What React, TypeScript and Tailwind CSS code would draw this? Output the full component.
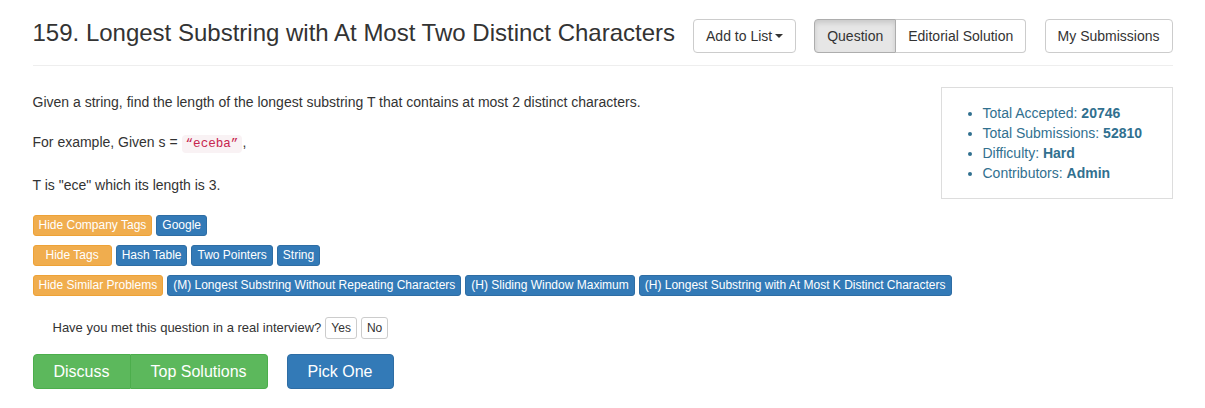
import React from 'react';

const Tag: React.FC<{ kind: 'warn' | 'primary'; wide?: boolean; children: React.ReactNode }> = ({ kind, wide, children }) => (
  <span
    className={
      'inline-block whitespace-nowrap rounded-[3px] border text-[12px] leading-[17px] py-px text-white ' +
      (wide ? 'px-3 ' : 'px-[5px] ') +
      (kind === 'warn' ? 'bg-[#f0ad4e] border-[#eea236]' : 'bg-[#337ab7] border-[#2e6da4]')
    }
  >
    {children}
  </span>
);

const App: React.FC = () => {
  return (
    <div className="min-h-[408px] bg-white text-[#333] font-['Liberation_Sans',Arial,sans-serif] text-[14px] leading-[20px]">
      <div className="w-[1170px] mx-auto px-[15px]">
        {/* header */}
        <div className="flex items-center whitespace-nowrap pt-[19px] pb-[12px] border-b border-[#eee]">
          <h3 className="text-[24px] leading-[28px] font-normal text-[#333] -mt-[6px]">
            159. Longest Substring with At Most Two Distinct Characters
          </h3>
          <button className="ml-[18px] h-[34px] px-[12px] border border-[#ccc] rounded-[4px] bg-white flex items-center gap-[3px]">
            Add to List
            <span className="inline-block w-0 h-0 border-x-[4px] border-x-transparent border-t-[4px] border-t-[#333]" />
          </button>
          <div className="ml-[18px] flex">
            <button className="h-[34px] px-[12px] border border-[#adadad] rounded-l-[4px] bg-[#e6e6e6] shadow-[inset_0_3px_5px_rgba(0,0,0,0.125)]">
              Question
            </button>
            <button className="h-[34px] px-[12px] border border-l-0 border-[#ccc] rounded-r-[4px] bg-white">
              Editorial Solution
            </button>
          </div>
          <button className="ml-auto h-[34px] px-[12px] border border-[#ccc] rounded-[4px] bg-white">
            My Submissions
          </button>
        </div>

        {/* body */}
        <div className="pt-[21px]">
          <div className="float-right w-[232px] h-[112px] border border-[#ddd] pt-[15px] pl-[41px] text-[#31708f] whitespace-nowrap">
            <ul className="list-disc">
              <li>Total Accepted: <b>20746</b></li>
              <li>Total Submissions: <b>52810</b></li>
              <li>Difficulty: <b>Hard</b></li>
              <li>Contributors: <b>Admin</b></li>
            </ul>
          </div>

          <p className="pt-[5px] mb-[20px]">Given a string, find the length of the longest substring T that contains at most 2 distinct characters.</p>
          <p className="mb-[20px] leading-[20px]">
            For example, Given s ={' '}
            <code className="font-['Liberation_Mono',monospace] text-[12.6px] text-[#c7254e] bg-[#f9f2f4] rounded-[4px] px-[4px] py-[2px]">
              “eceba”
            </code>
            ,
          </p>
          <p className="mt-[22px] mb-[18px] -translate-y-px">T is "ece" which its length is 3.</p>

          <div className="clear-both flex gap-[4px] pt-px mb-[9px]">
            <Tag kind="warn">Hide Company Tags</Tag>
            <Tag kind="primary">Google</Tag>
          </div>
          <div className="flex gap-[4px] mb-[9px]">
            <Tag kind="warn" wide>Hide Tags</Tag>
            <Tag kind="primary">Hash Table</Tag>
            <Tag kind="primary">Two Pointers</Tag>
            <Tag kind="primary">String</Tag>
          </div>
          <div className="flex gap-[4px]">
            <Tag kind="warn">Hide Similar Problems</Tag>
            <Tag kind="primary">(M) Longest Substring Without Repeating Characters</Tag>
            <Tag kind="primary">(H) Sliding Window Maximum</Tag>
            <Tag kind="primary">(H) Longest Substring with At Most K Distinct Characters</Tag>
          </div>

          <div className="flex items-center gap-[4px] mt-[21px] ml-[20px] text-[13px] whitespace-nowrap">
            <span>Have you met this question in a real interview?</span>
            <button className="h-[22px] px-[5px] border border-[#ccc] rounded-[3px] bg-white text-[12px]">Yes</button>
            <button className="h-[22px] px-[5px] border border-[#ccc] rounded-[3px] bg-white text-[12px]">No</button>
          </div>

          <div className="flex items-center mt-[15px] whitespace-nowrap">
            <div className="flex">
              <button className="h-[35px] px-[20px] text-[16px] text-white bg-[#5cb85c] border border-[#4cae4c] rounded-l-[4px]">
                Discuss
              </button>
              <button className="h-[35px] px-[20px] text-[16px] text-white bg-[#5cb85c] border border-l-0 border-[#4cae4c] rounded-r-[4px]">
                Top Solutions
              </button>
            </div>
            <button className="ml-[19px] h-[35px] px-[20px] text-[16px] text-white bg-[#337ab7] border border-[#2e6da4] rounded-[4px]">
              Pick One
            </button>
          </div>
        </div>
      </div>
    </div>
  );
};

export default App;
